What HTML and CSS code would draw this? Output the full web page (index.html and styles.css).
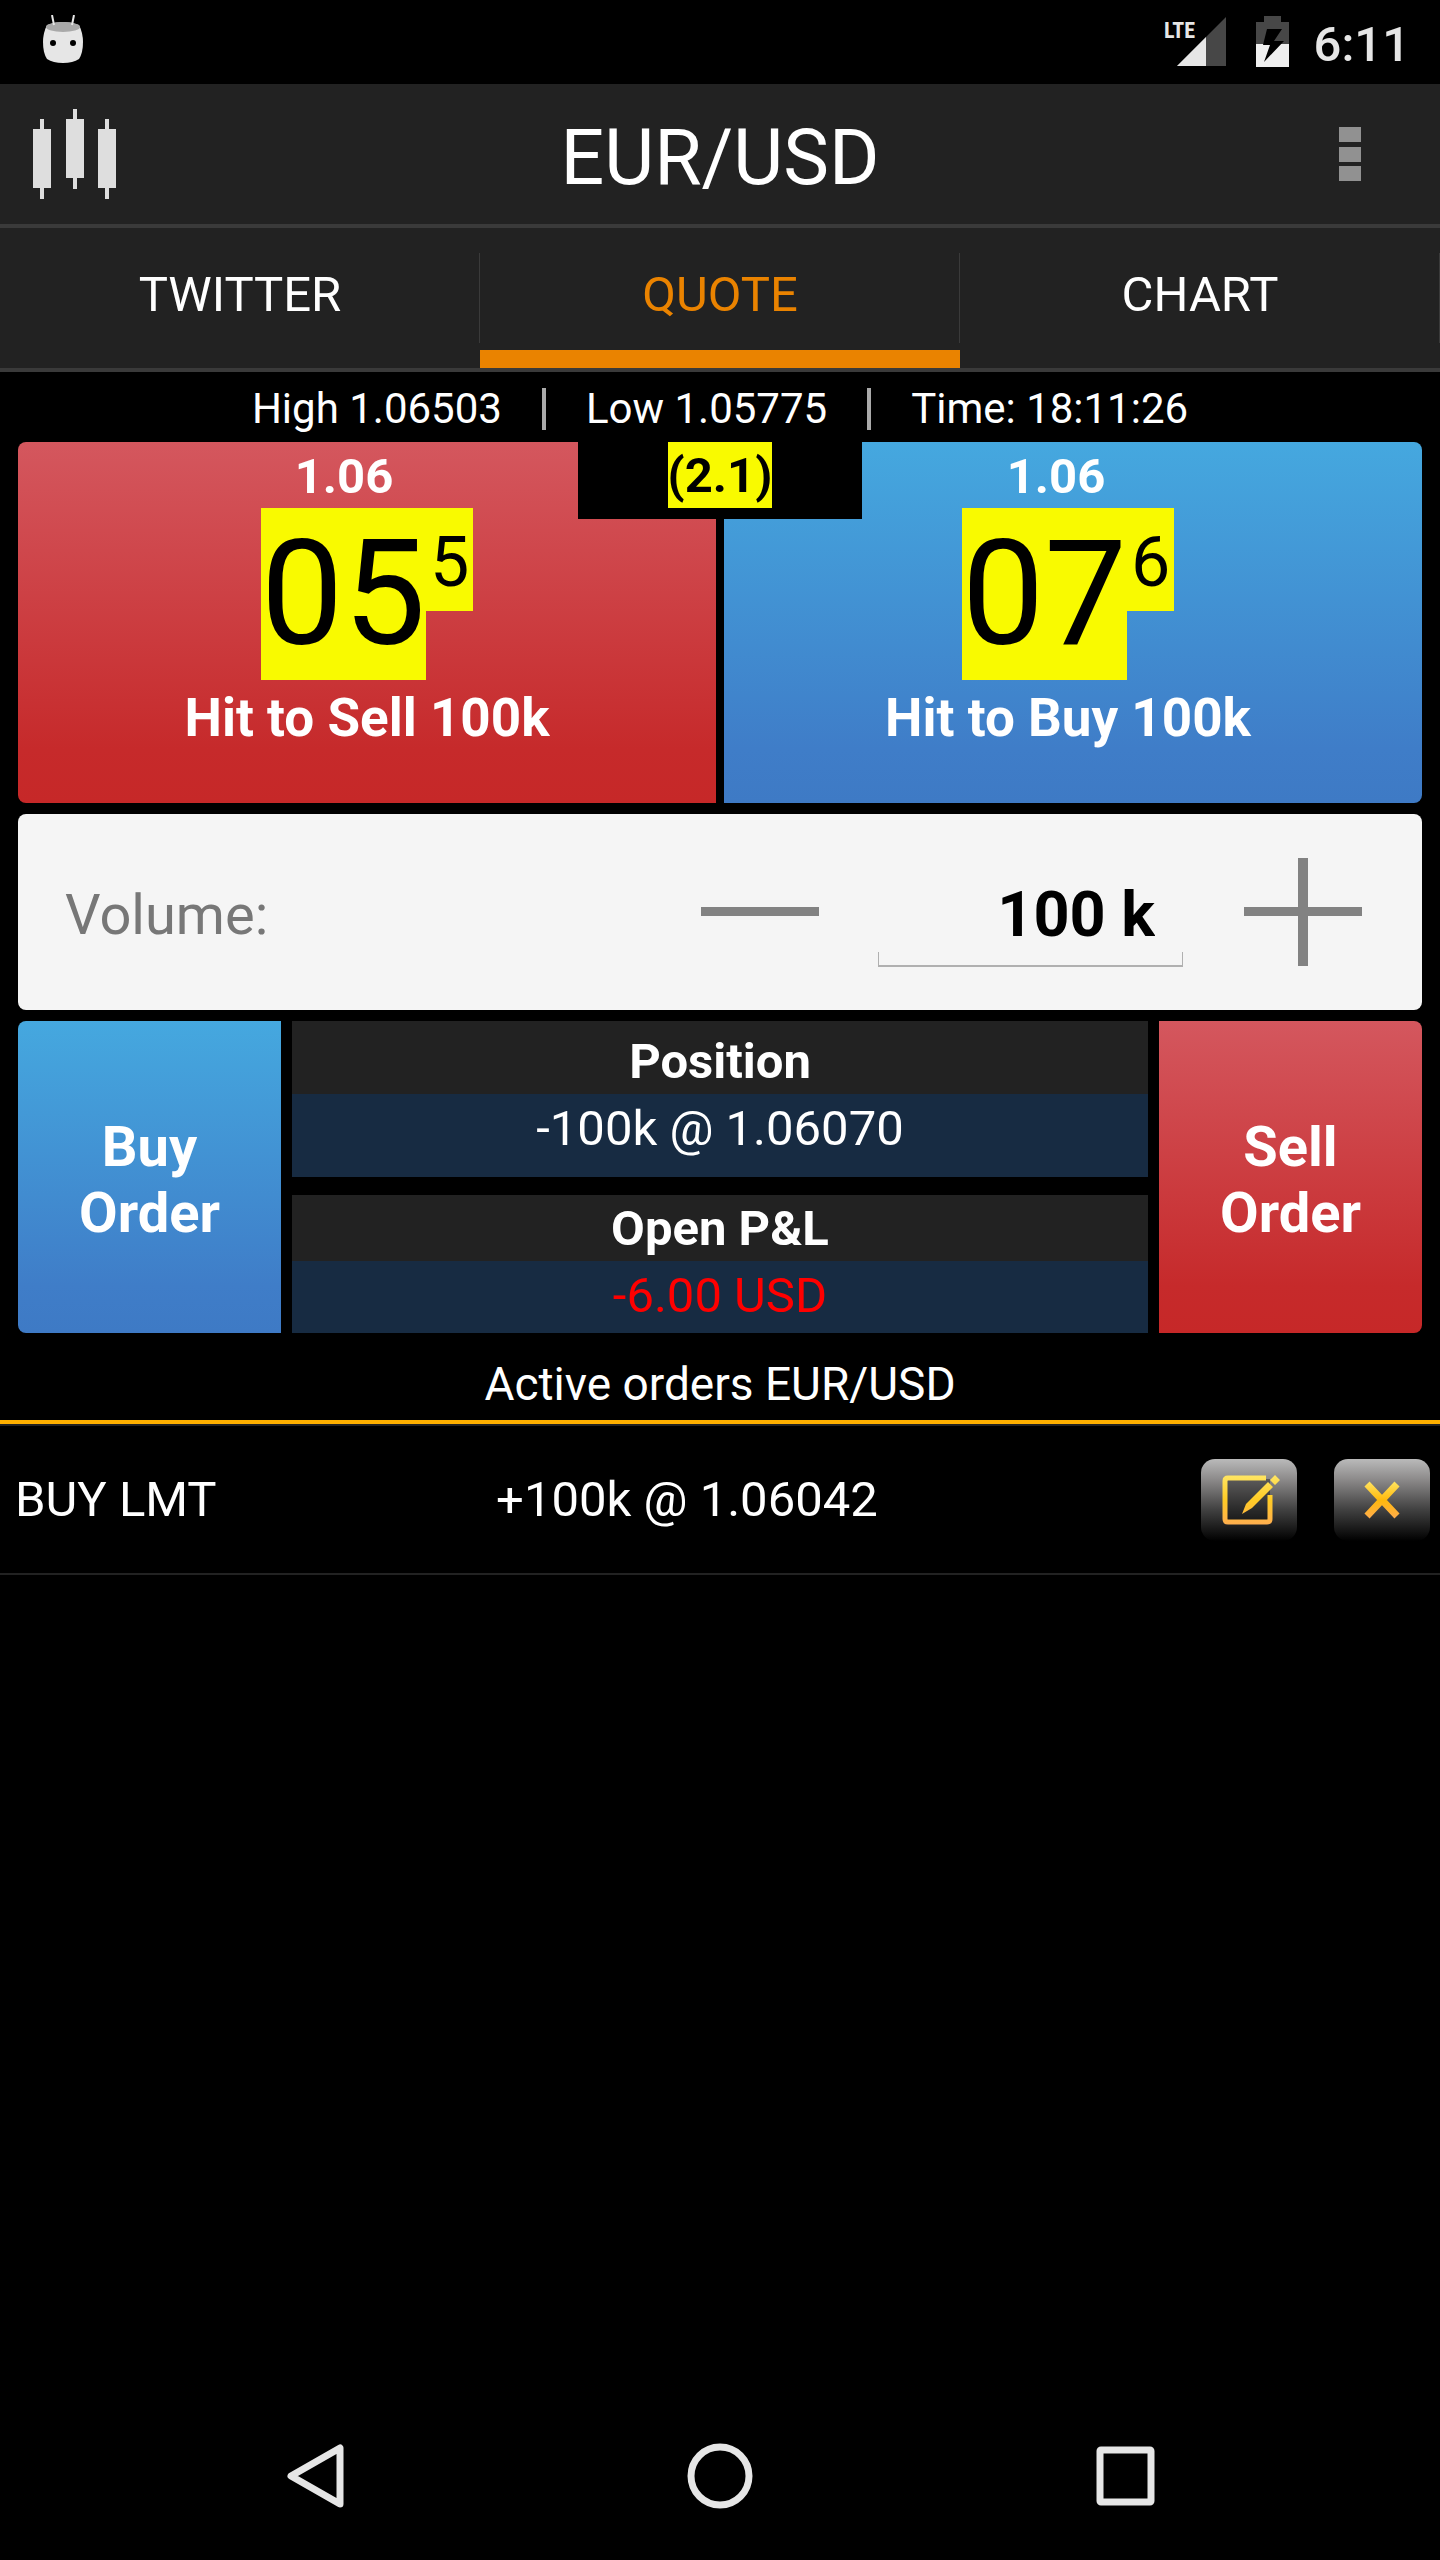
FILE: index.html
```html
<!DOCTYPE html>
<html lang="en">
<head>
  <meta charset="UTF-8">
  <meta name="viewport" content="width=device-width, initial-scale=1.0">
  <title>EUR/USD</title>
  <link rel="stylesheet" href="styles.css">
</head>
<body>
  <div class="status">
    <svg class="droid" width="40" height="48" viewBox="0 0 40 48">
      <path d="M4 10 Q20 4 36 10 Q40 18 40 27 Q40 38 36 44 Q30 48 20 48 Q10 48 4 44 Q0 38 0 27 Q0 18 4 10Z" fill="#e6e6e6"/>
      <ellipse cx="20" cy="12" rx="17" ry="5" fill="#a9a9a9"/>
      <path d="M9 0 L11 10 M31 0 L29 10" stroke="#e6e6e6" stroke-width="2"/>
      <circle cx="10" cy="28" r="3"/>
      <circle cx="30" cy="28" r="3"/>
    </svg>
    <div class="statusRight">
      <svg width="64" height="52" viewBox="0 0 64 52">
        <path d="M64 2 V51 H15Z" fill="#474747"/>
        <path d="M44 22 V51 H15Z" fill="#e6e6e6"/>
        <text class="lte" x="2" y="23">LTE</text>
      </svg>
      <svg class="battery" width="33" height="52" viewBox="0 0 33 52">
        <path d="M8 1 H25 V7 H33 V29 H0 V7 H8Z" fill="#474747"/>
        <path d="M0 29 H33 V52 H0Z" fill="#efefef"/>
        <path d="M11 14 H26 L18 26 H28 L8 47 L14 30 H7Z" fill="#000"/>
      </svg>
      <span class="clock">6:11</span>
    </div>
  </div>

  <header class="header">
    <button class="iconBut" aria-label="Markets">
      <svg width="84" height="92" viewBox="0 0 84 92" fill="#dedede">
        <path d="M0 21 H7 V11 H11 V21 H18 V80 H11 V91 H7 V80 H0Z"/>
        <path d="M33 11 H40 V1 H44 V11 H51 V70 H44 V81 H40 V70 H33Z"/>
        <path d="M65 21 H72 V11 H76 V21 H83 V80 H76 V91 H72 V80 H65Z"/>
      </svg>
    </button>
    <h1>EUR/USD</h1>
    <button class="iconBut menu" aria-label="Menu">
      <svg width="22" height="54" viewBox="0 0 22 54" fill="#919191">
        <path d="M0 0 H22 V15 H0Z M0 20 H22 V35 H0Z M0 39 H22 V54 H0Z"/>
      </svg>
    </button>
  </header>

  <nav class="tabs">
    <a href="#twitter">TWITTER</a>
    <a href="#quote" class="active">QUOTE</a>
    <a href="#chart">CHART</a>
  </nav>

  <main>
    <div class="info">
      <span>High 1.06503</span>
      <span>Low 1.05775</span>
      <span>Time: 18:11:26</span>
    </div>

    <div class="quotes">
      <button class="quote sell">
        <span class="big">1.06</span>
        <span class="pips"><span class="pip">05</span><span class="frac">5</span></span>
        <span class="hit">Hit to Sell 100k</span>
      </button>
      <button class="quote buy">
        <span class="big">1.06</span>
        <span class="pips"><span class="pip">07</span><span class="frac">6</span></span>
        <span class="hit">Hit to Buy 100k</span>
      </button>
      <div class="spread"><span>(2.1)</span></div>
    </div>

    <div class="volume">
      <label for="vol">Volume:</label>
      <button class="step" aria-label="Less">
        <svg width="118" height="108" viewBox="0 0 118 108"><path d="M0 49 H118 V58 H0Z" fill="#828282"/></svg>
      </button>
      <div class="field"><input type="text" id="vol" value="100 k"></div>
      <button class="step" aria-label="More">
        <svg width="118" height="108" viewBox="0 0 118 108"><path d="M0 49 H54 V0 H64 V49 H118 V58 H64 V108 H54 V58 H0Z" fill="#828282"/></svg>
      </button>
    </div>

    <div class="orders">
      <button class="order buy">Buy<br>Order</button>
      <div class="stats">
        <div class="stat">
          <h2>Position</h2>
          <p>-100k @ 1.06070</p>
        </div>
        <div class="stat pl">
          <h2>Open P&amp;L</h2>
          <p>-6.00 USD</p>
        </div>
      </div>
      <button class="order sell">Sell<br>Order</button>
    </div>

    <h3 class="activeTitle">Active orders EUR/USD</h3>
    <div class="activeRow">
      <span class="type">BUY LMT</span>
      <span class="amount">+100k @ 1.06042</span>
      <button class="act" aria-label="Edit order">
        <svg width="66" height="54" viewBox="-6 0 66 54" fill="none">
          <defs>
            <linearGradient id="gold" x1="0" y1="0" x2="0" y2="54" gradientUnits="userSpaceOnUse">
              <stop offset="0" stop-color="#ffe869"/>
              <stop offset="0.5" stop-color="#ffcb25"/>
              <stop offset="1" stop-color="#ffab52"/>
            </linearGradient>
          </defs>
          <rect x="4" y="6" width="44" height="42" fill="#000" fill-opacity="0.35"/>
          <path d="M44 5 H6 Q3 5 3 8 V46 Q3 49 6 49 H45 Q48 49 48 46 V22" stroke="url(#gold)" stroke-width="5"/>
          <path d="M20 41 L24 31 L46 9 L51 14 L30 35Z M48 7 L53 2 L58 7 L53 12Z" fill="url(#gold)"/>
        </svg>
      </button>
      <button class="act" aria-label="Cancel order">
        <svg width="38" height="40" viewBox="0 0 38 40">
          <defs>
            <linearGradient id="gold2" x1="0" y1="0" x2="0" y2="40" gradientUnits="userSpaceOnUse">
              <stop offset="0" stop-color="#ffe869"/>
              <stop offset="0.5" stop-color="#ffb90c"/>
              <stop offset="1" stop-color="#ffab52"/>
            </linearGradient>
          </defs>
          <path d="M4 4 L34 36 M34 4 L4 36" stroke="url(#gold2)" stroke-width="7"/>
        </svg>
      </button>
    </div>
  </main>

  <div class="navbar">
    <button aria-label="Back">
      <svg width="66" height="66" viewBox="0 0 66 66"><path d="M58 5 V61 L9 33Z" fill="none" stroke="#e6e6e6" stroke-width="7" stroke-linejoin="round"/></svg>
    </button>
    <button aria-label="Home">
      <svg width="66" height="66" viewBox="0 0 66 66"><circle cx="33" cy="33" r="29" fill="none" stroke="#e6e6e6" stroke-width="7"/></svg>
    </button>
    <button aria-label="Recent">
      <svg width="66" height="66" viewBox="0 0 66 66"><rect x="8" y="7" width="51" height="52" rx="1" fill="none" stroke="#e6e6e6" stroke-width="7" stroke-linejoin="round"/></svg>
    </button>
  </div>
</body>
</html>
```
FILE: styles.css
```css
* {
  padding: 0;
  margin: 0;
  box-sizing: border-box;
}

body {
  background: black;
  color: white;
  font-family: Roboto, "Liberation Sans", sans-serif;
  font-size: 49px;
  min-height: 100vh;
  display: flex;
  flex-direction: column;
}

button {
  border: none;
  background: none;
  color: white;
  font-family: inherit;
}

svg {
  display: block;
}

/* status bar */
.status {
  height: 84px;
  display: flex;
  align-items: flex-start;
  justify-content: space-between;
  padding: 15px 30px 0 43px;
}

.statusRight {
  display: flex;
  align-items: flex-start;
}

.lte {
  font-family: "Roboto Condensed", "Liberation Sans Narrow", Roboto, sans-serif;
  font-size: 22px;
  font-weight: bold;
  fill: #e6e6e6;
}

.battery {
  margin: 0 25px 0 30px;
}

.clock {
  font-weight: 500;
  line-height: 60px;
  color: #e6e6e6;
}

/* title bar */
.header {
  height: 144px;
  background: #222;
  border-bottom: 4px solid #3a3a3a;
  display: flex;
  align-items: center;
  justify-content: space-between;
}

.iconBut {
  width: 150px;
  display: flex;
  padding-left: 33px;
}

.menu {
  justify-content: flex-end;
  padding: 0 79px 0 0;
}

h1 {
  font-size: 77px;
  font-weight: normal;
  padding-top: 8px;
}

/* tabs */
.tabs {
  display: flex;
  background: #222;
  border-bottom: 4px solid #3a3a3a;
}

.tabs a {
  flex: 1;
  height: 140px;
  line-height: 134px;
  text-align: center;
  text-decoration: none;
  color: white;
  background: linear-gradient(#3a3a3a, #3a3a3a) right 25px / 1px 90px no-repeat;
}

.tabs .active {
  color: #ea8300;
  box-shadow: inset 0 -18px #ea8300;
}

main {
  flex: 1;
}

.info {
  display: flex;
  justify-content: center;
  font-size: 42px;
  line-height: 42px;
  padding: 16px 0 12px;
}

.info span {
  padding: 0 40px;
}

.info span + span {
  border-left: 4px solid #aaa;
}

/* buy / sell */
.sell {
  background: linear-gradient(#d4575e, #c62a2b 85%, #c62828);
}

.buy {
  background: linear-gradient(#45a8df, #3f7dc8 85%, #3e7ac5);
}

.quotes {
  position: relative;
  display: grid;
  grid-template-columns: 1fr 1fr;
  gap: 8px;
  margin: 0 18px 11px;
}

.quote {
  height: 361px;
  display: flex;
  flex-direction: column;
  align-items: center;
  justify-content: flex-start;
  border-radius: 8px 0 0 8px;
}

.quote.buy {
  border-radius: 0 8px 8px 0;
  padding-right: 10px;
}

.big {
  font-size: 49px;
  font-weight: bold;
  line-height: 66px;
  padding: 2px 46px 0 0;
  height: 66px;
}

.buy .big {
  padding-right: 24px;
}

.pips {
  display: flex;
  align-items: flex-start;
  color: black;
}

.pip {
  background: #f9fa00;
  font-size: 147px;
  line-height: 172px;
}

.frac {
  background: #f9fa00;
  font-size: 70px;
  line-height: 98px;
  padding: 5px 4px 0;
}

.hit {
  font-size: 53px;
  font-weight: bold;
  line-height: 76px;
}

.spread {
  position: absolute;
  top: 0;
  left: 50%;
  width: 284px;
  height: 77px;
  margin-left: -142px;
  background: black;
  text-align: center;
}

.spread span {
  display: inline-block;
  background: #f9fa00;
  color: black;
  font-weight: bold;
  line-height: 64px;
  padding-top: 2px;
}

/* volume */
.volume {
  height: 196px;
  margin: 0 18px 11px;
  padding: 0 60px 0 47px;
  background: #f5f5f5;
  border-radius: 8px;
  display: flex;
  align-items: center;
}

.volume label {
  flex: 1;
  font-size: 56px;
  padding-top: 6px;
  color: #777;
}

.field {
  width: 305px;
  margin: 10px 61px 0 59px;
  background: linear-gradient(#b0b0b0, #b0b0b0) left bottom / 1px 13px no-repeat,
    linear-gradient(#b0b0b0, #b0b0b0) right bottom / 1px 13px no-repeat;
  border-bottom: 2px solid #b0b0b0;
}

.field input {
  display: block;
  width: 100%;
  height: 98px;
  border: none;
  outline: none;
  background: none;
  font-family: inherit;
  font-size: 63px;
  font-weight: bold;
  text-align: right;
  padding: 0 28px 4px 0;
}

/* orders */
.orders {
  display: flex;
  gap: 11px;
  margin: 0 18px;
  height: 312px;
}

.order {
  width: 263px;
  font-size: 56px;
  font-weight: bold;
  line-height: 66px;
  padding-top: 6px;
}

.order.buy {
  border-radius: 8px 0 0 8px;
}

.order.sell {
  border-radius: 0 8px 8px 0;
}

.stats {
  flex: 1;
  display: flex;
  flex-direction: column;
  justify-content: space-between;
  text-align: center;
}

.stat {
  background: #172b42;
}

.stat h2 {
  background: #222;
  font-size: 49px;
  line-height: 64px;
  padding-top: 9px;
}

.stat p {
  line-height: 70px;
  padding-bottom: 13px;
}

.pl h2 {
  padding-top: 2px;
}

.pl p {
  padding-bottom: 2px;
  color: red;
}

.activeTitle {
  font-size: 46px;
  font-weight: normal;
  text-align: center;
  line-height: 72px;
  padding-top: 15px;
  border-bottom: 4px solid #ffb000;
}

.activeRow {
  display: flex;
  align-items: center;
  height: 151px;
  padding: 0 10px 0 15px;
  border-top: 2px solid #222;
  border-bottom: 2px solid #222;
}

.type {
  width: 34%;
}

.amount {
  flex: 1;
}

.act {
  width: 96px;
  height: 82px;
  margin-left: 37px;
  border-radius: 14px;
  background: linear-gradient(#bababa, #8c8a8a 25%, #444 60%, #000);
  display: flex;
  align-items: center;
  justify-content: center;
}

/* system buttons */
.navbar {
  height: 168px;
  display: flex;
  justify-content: center;
  align-items: center;
  gap: 339px;
}
```
